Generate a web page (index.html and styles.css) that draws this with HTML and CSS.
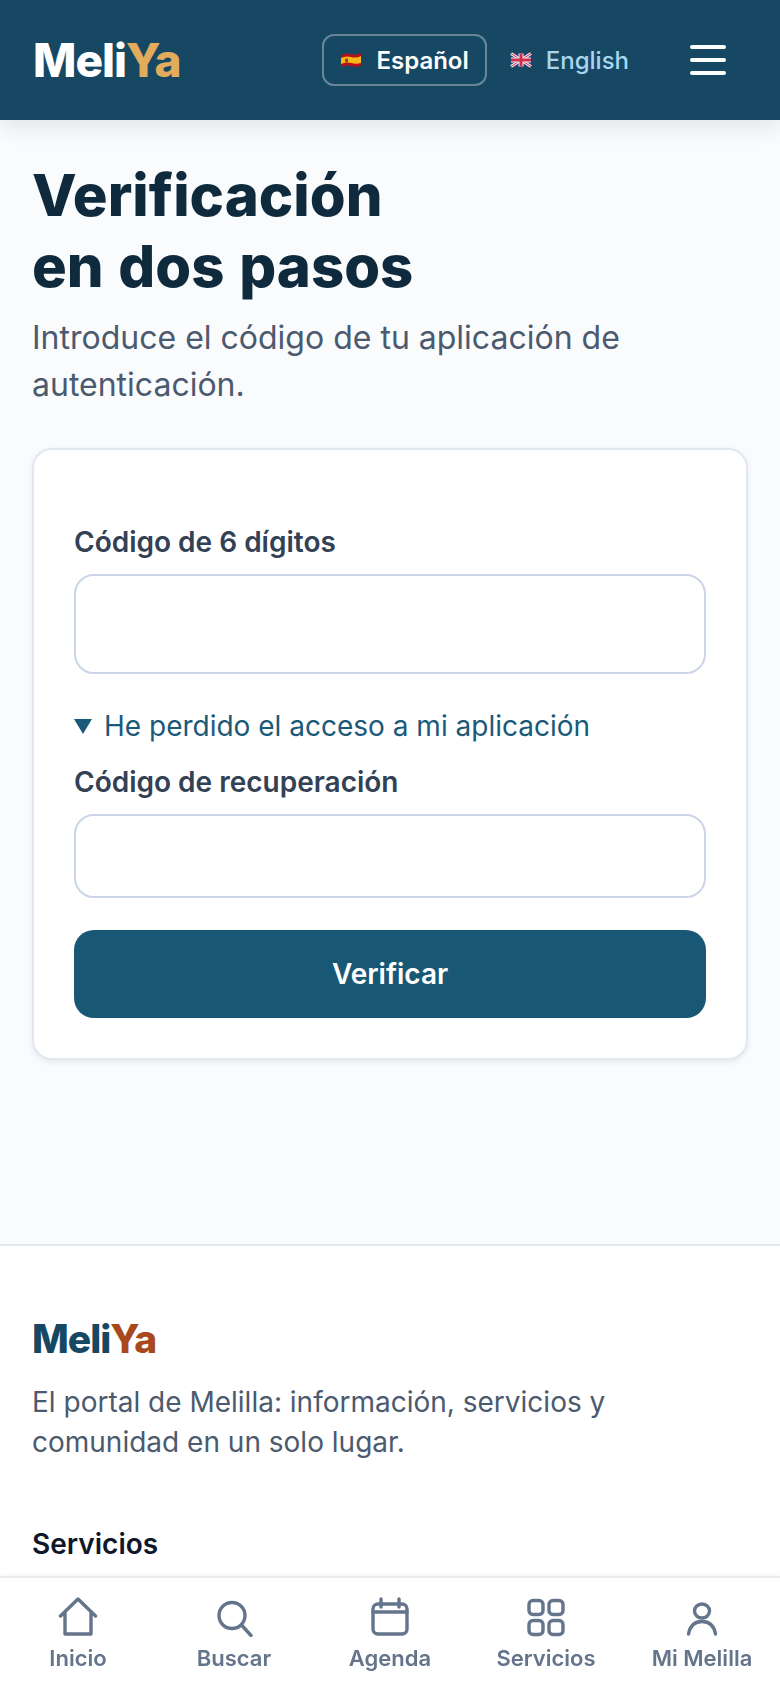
FILE: index.html
```html
<!DOCTYPE html>
<html lang="es">
<head>
  <meta charset="UTF-8" />
  <meta name="viewport" content="width=device-width, initial-scale=1.0"/>
  <title>MeliYa - Verificación en dos pasos</title>
  <link rel="stylesheet" href="styles.css">
</head>
<body>

  <header class="site-header">
    <a class="logo" href="#">Meli<span>Ya</span></a>
    <div class="lang-switch">
      <a class="lang-option active" href="#">
        <svg class="flag" viewBox="0 0 22 16" aria-hidden="true">
          <path d="M1 3 Q6 0.5 11 2 T21 1 V14 Q16 15.5 11 14 T1 15 Z" fill="#b3121d"/>
          <path d="M1 6 Q6 3.5 11 5 T21 4 V11 Q16 12.5 11 11 T1 12 Z" fill="#f5b818"/>
          <rect x="5" y="6.5" width="3" height="4" rx="1" fill="#a5401a"/>
        </svg>
        Español
      </a>
      <a class="lang-option" href="#">
        <svg class="flag" viewBox="0 0 22 16" aria-hidden="true">
          <rect x="1" y="1.5" width="20" height="13" fill="#2c3a78"/>
          <path d="M1 1.5 L21 14.5 M21 1.5 L1 14.5" stroke="#f3e9ee" stroke-width="3"/>
          <path d="M1 1.5 L21 14.5 M21 1.5 L1 14.5" stroke="#d0304a" stroke-width="1"/>
          <path d="M11 1.5 V14.5 M1 8 H21" stroke="#f3e9ee" stroke-width="5"/>
          <path d="M11 1.5 V14.5 M1 8 H21" stroke="#d0304a" stroke-width="3"/>
        </svg>
        English
      </a>
    </div>
    <button class="menu-btn" aria-label="Menú">
      <span></span><span></span><span></span>
    </button>
  </header>

  <main class="content">
    <h1>Verificación<br>en dos pasos</h1>
    <p class="subtitle">Introduce el código de tu aplicación de autenticación.</p>

    <form class="card">
      <label class="field-label" for="code">Código de 6 dígitos</label>
      <input class="field field-code" id="code" type="text" />

      <details class="recovery" open>
        <summary>He perdido el acceso a mi aplicación</summary>
        <label class="field-label" for="recovery">Código de recuperación</label>
        <input class="field field-recovery" id="recovery" type="text" />
      </details>

      <button class="submit-btn" type="button">Verificar</button>
    </form>
  </main>

  <footer class="site-footer">
    <a class="logo logo-dark" href="#">Meli<span>Ya</span></a>
    <p class="footer-text">El portal de Melilla: información, servicios y comunidad en un solo lugar.</p>
    <h2>Servicios</h2>
  </footer>

  <nav class="bottom-nav">
    <a class="nav-item" href="#">
      <svg viewBox="0 0 40 40" aria-hidden="true"><path d="M2.5 19 L20 2 L37.5 19 M7 15 V37 H33 V15"/></svg>
      Inicio
    </a>
    <a class="nav-item" href="#">
      <svg viewBox="0 0 40 40" aria-hidden="true"><circle cx="18" cy="18.5" r="13"/><path d="M27.5 28 L37 38.5"/></svg>
      Buscar
    </a>
    <a class="nav-item" href="#">
      <svg viewBox="0 0 40 40" aria-hidden="true"><rect x="3" y="7" width="34" height="30" rx="5"/><path d="M3 15 H37 M11 2 V10 M29 2 V10"/></svg>
      Agenda
    </a>
    <a class="nav-item" href="#">
      <svg viewBox="0 0 40 40" aria-hidden="true"><rect x="3" y="3.5" width="14" height="14" rx="4"/><rect x="23" y="3.5" width="14" height="14" rx="4"/><rect x="3" y="23.5" width="14" height="14" rx="4"/><rect x="23" y="23.5" width="14" height="14" rx="4"/></svg>
      Servicios
    </a>
    <a class="nav-item" href="#">
      <svg viewBox="0 0 40 40" aria-hidden="true"><ellipse cx="20" cy="14" rx="7.5" ry="7"/><path d="M6.5 37 C8 29 13 24.5 20 24.5 C27 24.5 32 29 33.5 37"/></svg>
      Mi Melilla
    </a>
  </nav>

</body>
</html>
```

FILE: styles.css
```css
* {
  box-sizing: border-box;
}

body {
  margin: 0;
  font-family: Inter, "Liberation Sans", sans-serif;
  background-color: #f9fbfd;
  color: #0f2a3d;
}

a {
  text-decoration: none;
  color: inherit;
}

.site-header {
  height: 120px;
  background-color: #164863;
  display: flex;
  align-items: center;
  padding: 0 54px 0 33px;
  box-shadow: 0 4px 24px rgba(15, 42, 61, 0.12);
}

.logo {
  font-size: 46px;
  font-weight: 800;
  letter-spacing: -1px;
  color: #fff;
}

.logo span {
  color: #e3ac5c;
}

.lang-switch {
  margin-left: auto;
  display: flex;
  align-items: center;
  gap: 5px;
  margin-right: 43px;
}

.lang-option {
  display: flex;
  align-items: center;
  gap: 14px;
  height: 52px;
  padding: 0 16px;
  border: 2px solid transparent;
  border-radius: 12px;
  font-size: 24px;
  font-weight: 500;
  color: #a9d6ee;
}

.lang-option.active {
  border-color: rgba(255, 255, 255, 0.35);
  color: #fff;
  font-weight: 600;
}

.flag {
  width: 22px;
  height: 16px;
}

.menu-btn {
  width: 36px;
  padding: 0;
  background: none;
  border: 0;
  display: flex;
  flex-direction: column;
  gap: 9px;
}

.menu-btn span {
  height: 4px;
  border-radius: 2px;
  background-color: #fff;
}

.content {
  padding: 40px 32px 0;
  height: 1124px;
}

h1 {
  margin: 0;
  font-size: 58px;
  line-height: 71px;
  font-weight: 800;
  word-spacing: 2px;
  color: #0f2a3d;
}

.subtitle {
  margin: 12px 0 0;
  font-size: 32px;
  line-height: 47px;
  color: #4b5a6e;
}

.card {
  margin-top: 40px;
  background-color: #fff;
  border: 2px solid #e2e8f0;
  border-radius: 20px;
  padding: 74px 40px 40px;
  box-shadow: 0 2px 6px rgba(15, 42, 61, 0.08);
}

.field-label {
  display: block;
  font-size: 28px;
  line-height: 36px;
  font-weight: 600;
  color: #334155;
}

.field {
  display: block;
  width: 100%;
  margin-top: 14px;
  background: #fff;
  border: 2px solid #cbd5e8;
  border-radius: 20px;
}

.field-code {
  height: 100px;
}

.field-recovery {
  height: 84px;
}

.recovery {
  margin-top: 34px;
}

.recovery summary {
  font-size: 28px;
  line-height: 36px;
  color: #1a5a78;
  margin-bottom: 20px;
  list-style: none;
  display: flex;
  align-items: center;
  gap: 12px;
}

.recovery summary::before {
  content: "";
  border-left: 9px solid transparent;
  border-right: 9px solid transparent;
  border-top: 15px solid #1a5a78;
}

.submit-btn {
  display: block;
  width: 100%;
  height: 88px;
  margin-top: 32px;
  background-color: #195875;
  color: #fff;
  border: 0;
  border-radius: 20px;
  font-family: inherit;
  font-size: 28px;
  font-weight: 600;
}

.site-footer {
  background-color: #fff;
  border-top: 2px solid #e2e8f0;
  padding: 70px 32px 180px;
}

.logo-dark {
  font-size: 39px;
  color: #164863;
  display: block;
  line-height: 46px;
}

.logo-dark span {
  color: #a8481c;
}

.footer-text {
  margin: 20px 0 0;
  font-size: 28px;
  line-height: 40px;
  color: #4b5a6e;
}

.site-footer h2 {
  margin: 64px 0 0;
  font-size: 28px;
  line-height: 36px;
  font-weight: 600;
  color: #0f172a;
}

.bottom-nav {
  position: fixed;
  left: 0;
  right: 0;
  bottom: 0;
  height: 112px;
  background-color: #fff;
  border-top: 2px solid #e9ecef;
  box-shadow: 0 -2px 4px rgba(15, 42, 61, 0.03);
  display: grid;
  grid-template-columns: repeat(5, 1fr);
  padding: 19px 0 0;
}

.nav-item {
  display: flex;
  flex-direction: column;
  align-items: center;
  gap: 5px;
  font-size: 22px;
  line-height: 32px;
  font-weight: 600;
  color: #64748b;
}

.nav-item svg {
  width: 40px;
  height: 40px;
  fill: none;
  stroke: #64748b;
  stroke-width: 3.4;
  stroke-linecap: round;
  stroke-linejoin: round;
}
```
